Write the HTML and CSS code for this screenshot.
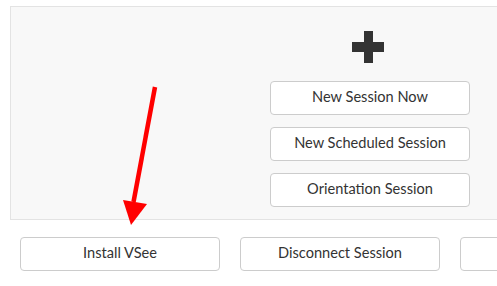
FILE: index.html
```html
<!DOCTYPE html>
<html>
<head>
<meta charset="utf-8">
<link rel="stylesheet" href="styles.css">
</head>
<body>
<div class="page">
  <div class="panel">
    <div class="plus" aria-hidden="true"></div>
    <div class="stack">
      <button class="btn">New Session Now</button>
      <button class="btn">New Scheduled Session</button>
      <button class="btn">Orientation Session</button>
    </div>
  </div>
  <div class="row">
    <button class="btn">Install VSee</button>
    <button class="btn">Disconnect Session</button>
    <button class="btn">&nbsp;</button>
  </div>
  <svg class="arrow" width="60" height="150" viewBox="0 0 60 150">
    <line x1="45" y1="7" x2="23.5" y2="122" stroke="#ff0000" stroke-width="4.5"/>
    <polygon points="13,120 37,124 21,145" fill="#ff0000"/>
  </svg>
</div>
</body>
</html>
```
FILE: styles.css
```css
html, body {
  margin: 0;
  padding: 0;
  background: #ffffff;
  overflow: hidden;
}
body {
  width: 497px;
  height: 286px;
  font-family: Lato, "Open Sans", sans-serif;
}
.page {
  position: relative;
  width: 497px;
  height: 286px;
  overflow: hidden;
  padding-top: 6px;
  box-sizing: border-box;
}
.panel {
  margin-left: 10px;
  width: 720px;
  box-sizing: border-box;
  background: #f8f8f8;
  border: 1px solid #e3e3e3;
  padding: 24px 0 12px;
  display: flex;
  flex-direction: column;
  align-items: center;
}
.plus {
  position: relative;
  width: 32px;
  height: 32px;
  margin-left: -4px;
  margin-bottom: 18px;
}
.plus::before,
.plus::after {
  content: "";
  position: absolute;
  background: #333333;
}
.plus::before {
  left: 12px;
  top: 0;
  width: 9px;
  height: 32px;
}
.plus::after {
  left: 0;
  top: 11px;
  width: 32px;
  height: 10px;
}
.stack {
  display: flex;
  flex-direction: column;
  gap: 12px;
}
.btn {
  width: 200px;
  height: 34px;
  flex: none;
  box-sizing: border-box;
  background: #ffffff;
  border: 1px solid #cccccc;
  border-radius: 4px;
  font-family: Lato, "Open Sans", sans-serif;
  font-size: 14.6px;
  color: #333333;
  padding: 0 0 3px;
  margin: 0;
}
.row {
  display: flex;
  gap: 20px;
  padding-left: 20px;
  margin-top: 17px;
}
.arrow {
  position: absolute;
  left: 110px;
  top: 80px;
}
```
